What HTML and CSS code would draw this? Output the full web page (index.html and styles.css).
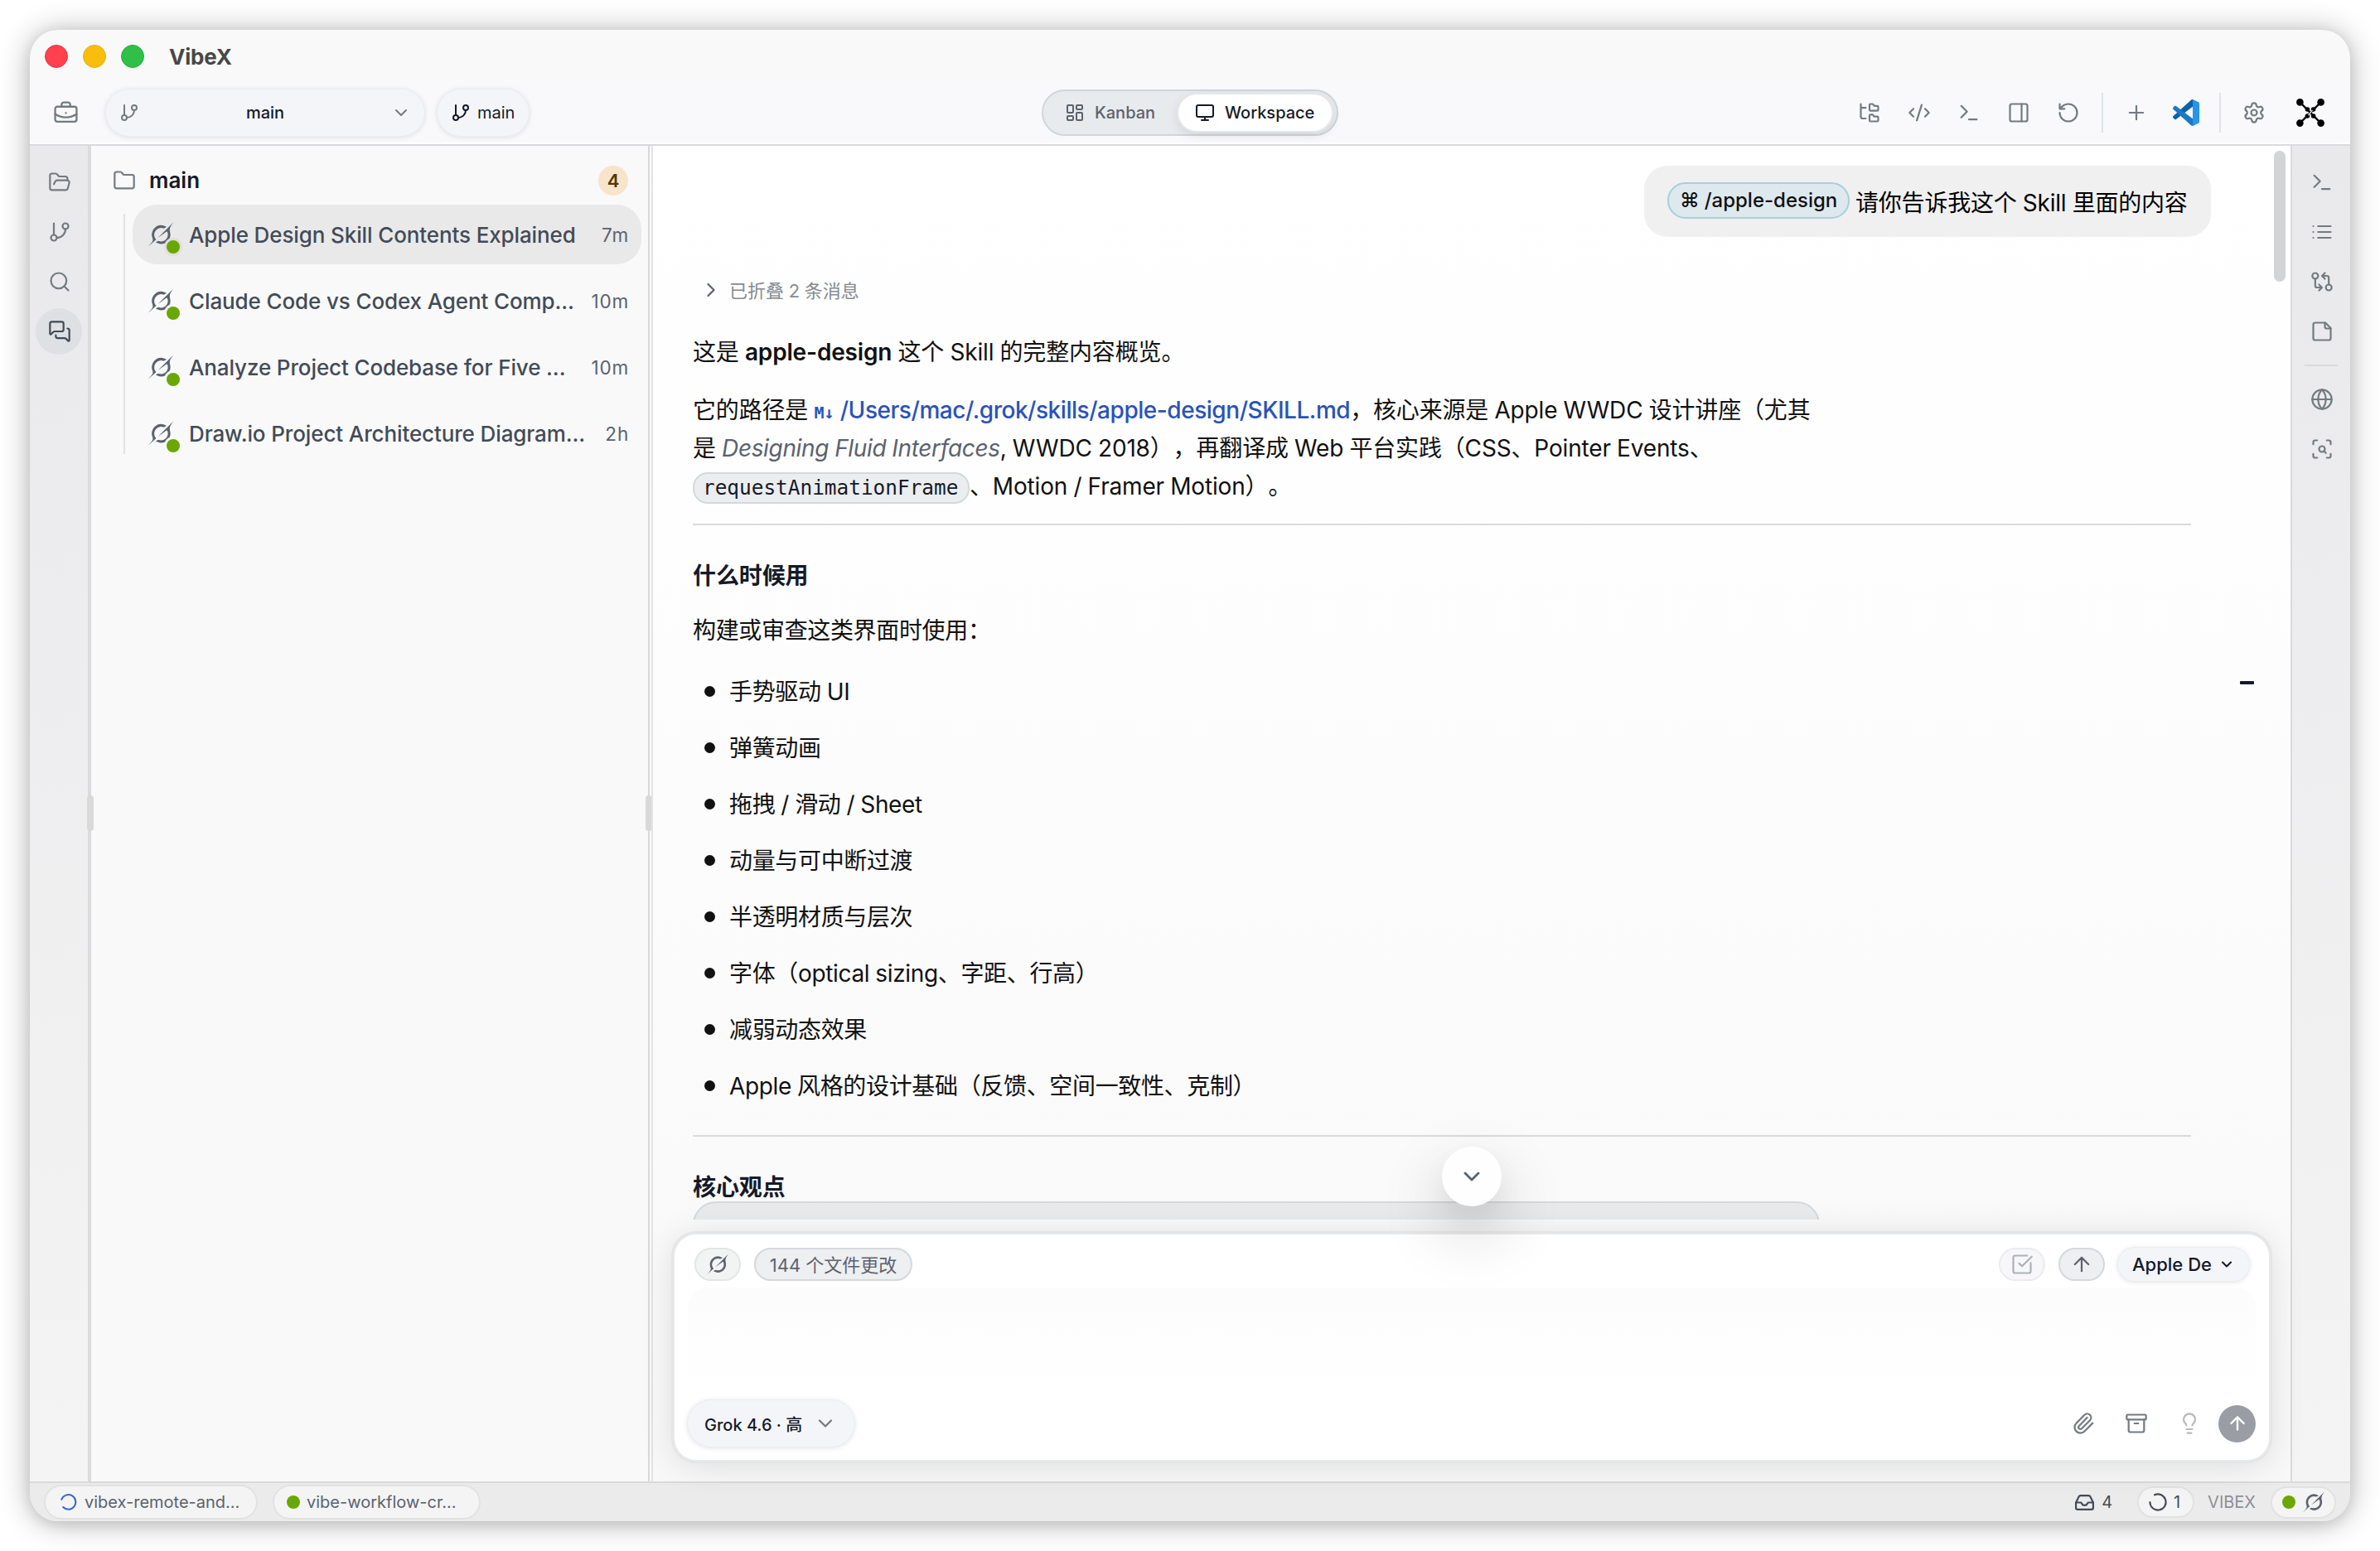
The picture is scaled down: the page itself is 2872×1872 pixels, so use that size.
FILE: index.html
```html
<!DOCTYPE html>
<html lang="zh-CN">
<head>
    <meta charset="UTF-8">
    <title>VibeX</title>
    <link rel="stylesheet" href="styles.css">
</head>
<body>
    <svg class="sprite" xmlns="http://www.w3.org/2000/svg">
        <symbol id="briefcase" viewBox="0 0 24 24"><path d="M12 12h.01M16 6V4a2 2 0 0 0-2-2h-4a2 2 0 0 0-2 2v2M22 13a18.15 18.15 0 0 1-20 0"/><rect width="20" height="14" x="2" y="6" rx="2"/></symbol>
        <symbol id="branch" viewBox="0 0 24 24"><path d="M6 3v12M18 9a9 9 0 0 1-9 9"/><circle cx="18" cy="6" r="3"/><circle cx="6" cy="18" r="3"/></symbol>
        <symbol id="chevron-down" viewBox="0 0 24 24"><path d="m6 9 6 6 6-6"/></symbol>
        <symbol id="chevron-right" viewBox="0 0 24 24"><path d="m9 18 6-6-6-6"/></symbol>
        <symbol id="kanban" viewBox="0 0 24 24"><rect width="7" height="9" x="3" y="3" rx="1"/><rect width="7" height="5" x="14" y="3" rx="1"/><rect width="7" height="9" x="14" y="12" rx="1"/><rect width="7" height="5" x="3" y="16" rx="1"/></symbol>
        <symbol id="monitor" viewBox="0 0 24 24"><rect width="20" height="14" x="2" y="3" rx="2"/><path d="M8 21h8M12 17v4"/></symbol>
        <symbol id="folder-tree" viewBox="0 0 24 24"><path d="M20 10a1 1 0 0 0 1-1V6a1 1 0 0 0-1-1h-2.5a1 1 0 0 1-.8-.4l-.9-1.2A1 1 0 0 0 15 3h-2a1 1 0 0 0-1 1v5a1 1 0 0 0 1 1ZM20 21a1 1 0 0 0 1-1v-3a1 1 0 0 0-1-1h-2.9a1 1 0 0 1-.88-.55l-.42-.85a1 1 0 0 0-.92-.6H13a1 1 0 0 0-1 1v5a1 1 0 0 0 1 1ZM3 5a2 2 0 0 0 2 2h3M3 3v13a2 2 0 0 0 2 2h3"/></symbol>
        <symbol id="code" viewBox="0 0 24 24"><path d="m18 16 4-4-4-4M6 8l-4 4 4 4M14.5 4l-5 16"/></symbol>
        <symbol id="terminal" viewBox="0 0 24 24"><path d="m4 17 6-6-6-6M12 19h8"/></symbol>
        <symbol id="panel" viewBox="0 0 24 24"><rect width="18" height="18" x="3" y="3" rx="2"/><path d="M15 3v18"/></symbol>
        <symbol id="rotate" viewBox="0 0 24 24"><path d="M3 12a9 9 0 1 0 9-9 9.75 9.75 0 0 0-6.74 2.74L3 8M3 3v5h5"/></symbol>
        <symbol id="plus" viewBox="0 0 24 24"><path d="M5 12h14M12 5v14"/></symbol>
        <symbol id="gear" viewBox="0 0 24 24"><path d="M9.671 4.136a2.34 2.34 0 0 1 4.659 0 2.34 2.34 0 0 0 3.319 1.915 2.34 2.34 0 0 1 2.33 4.033 2.34 2.34 0 0 0 0 3.831 2.34 2.34 0 0 1-2.33 4.033 2.34 2.34 0 0 0-3.319 1.915 2.34 2.34 0 0 1-4.659 0 2.34 2.34 0 0 0-3.32-1.915 2.34 2.34 0 0 1-2.33-4.033 2.34 2.34 0 0 0 0-3.831A2.34 2.34 0 0 1 6.35 6.051a2.34 2.34 0 0 0 3.319-1.915"/><circle cx="12" cy="12" r="3"/></symbol>
        <symbol id="folder-open" viewBox="0 0 24 24"><path d="m6 14 1.5-2.9A2 2 0 0 1 9.24 10H20a2 2 0 0 1 1.94 2.5l-1.54 6a2 2 0 0 1-1.95 1.5H4a2 2 0 0 1-2-2V5a2 2 0 0 1 2-2h3.9a2 2 0 0 1 1.69.9l.81 1.2a2 2 0 0 0 1.67.9H18a2 2 0 0 1 2 2v2"/></symbol>
        <symbol id="folder" viewBox="0 0 24 24"><path d="M20 20a2 2 0 0 0 2-2V8a2 2 0 0 0-2-2h-7.9a2 2 0 0 1-1.69-.9L9.6 3.9A2 2 0 0 0 7.93 3H4a2 2 0 0 0-2 2v13a2 2 0 0 0 2 2Z"/></symbol>
        <symbol id="search" viewBox="0 0 24 24"><circle cx="11" cy="11" r="8"/><path d="m21 21-4.34-4.34"/></symbol>
        <symbol id="messages" viewBox="0 0 24 24"><path d="M16 10a2 2 0 0 1-2 2H6.828a2 2 0 0 0-1.414.586l-2.202 2.202A.71.71 0 0 1 2 14.286V4a2 2 0 0 1 2-2h10a2 2 0 0 1 2 2zM20 9a2 2 0 0 1 2 2v10.286a.71.71 0 0 1-1.212.502l-2.202-2.202A2 2 0 0 0 17.172 19H10a2 2 0 0 1-2-2v-1"/></symbol>
        <symbol id="list" viewBox="0 0 24 24"><path d="M3 6h.01M3 12h.01M3 18h.01M8 6h13M8 12h13M8 18h13"/></symbol>
        <symbol id="compare" viewBox="0 0 24 24"><circle cx="5" cy="6" r="3"/><path d="M12 6h5a2 2 0 0 1 2 2v7M15 9l-3-3 3-3M12 18H7a2 2 0 0 1-2-2V9M9 15l3 3-3 3"/><circle cx="19" cy="18" r="3"/></symbol>
        <symbol id="note" viewBox="0 0 24 24"><path d="M15.5 3H5a2 2 0 0 0-2 2v14a2 2 0 0 0 2 2h14a2 2 0 0 0 2-2V8.5L15.5 3Z"/><path d="M15 3v4a2 2 0 0 0 2 2h4"/></symbol>
        <symbol id="globe" viewBox="0 0 24 24"><circle cx="12" cy="12" r="10"/><path d="M12 2a14.5 14.5 0 0 0 0 20 14.5 14.5 0 0 0 0-20M2 12h20"/></symbol>
        <symbol id="scan" viewBox="0 0 24 24"><path d="M3 7V5a2 2 0 0 1 2-2h2M17 3h2a2 2 0 0 1 2 2v2M21 17v2a2 2 0 0 1-2 2h-2M7 21H5a2 2 0 0 1-2-2v-2M16 16l-1.9-1.9"/><circle cx="12" cy="12" r="3"/></symbol>
        <symbol id="check-square" viewBox="0 0 24 24"><path d="M21 10.656V19a2 2 0 0 1-2 2H5a2 2 0 0 1-2-2V5a2 2 0 0 1 2-2h12.344M9 11l3 3L22 4"/></symbol>
        <symbol id="arrow-up" viewBox="0 0 24 24"><path d="m5 12 7-7 7 7M12 19V5"/></symbol>
        <symbol id="clip" viewBox="0 0 24 24"><path d="m16 6-8.414 8.586a2 2 0 0 0 2.829 2.829l8.414-8.586a4 4 0 1 0-5.657-5.657l-8.379 8.551a6 6 0 1 0 8.485 8.485l8.379-8.551"/></symbol>
        <symbol id="archive" viewBox="0 0 24 24"><rect width="20" height="5" x="2" y="3" rx="1"/><path d="M4 8v11a2 2 0 0 0 2 2h12a2 2 0 0 0 2-2V8M10 12h4"/></symbol>
        <symbol id="bulb" viewBox="0 0 24 24"><path d="M15 14c.2-1 .7-1.7 1.5-2.5 1-.9 1.5-2.2 1.5-3.5A6 6 0 0 0 6 8c0 1 .2 2.2 1.5 3.5.7.7 1.3 1.5 1.5 2.5M9 18h6M10 22h4"/></symbol>
        <symbol id="inbox" viewBox="0 0 24 24"><path d="M22 12h-6l-2 3h-4l-2-3H2M5.45 5.11 2 12v6a2 2 0 0 0 2 2h16a2 2 0 0 0 2-2v-6l-3.45-6.89A2 2 0 0 0 16.76 4H7.24a2 2 0 0 0-1.79 1.11z"/></symbol>
        <symbol id="spinner" viewBox="0 0 24 24"><path d="M2.5 8.5A9.6 9.6 0 1 1 4.5 18.5"/></symbol>
        <symbol id="spinner-left" viewBox="0 0 24 24"><path d="M8 3.3A9.6 9.6 0 1 1 2.4 12"/></symbol>
        <symbol id="grok" viewBox="0 0 24 24"><path d="M9.27 15.29l7.978-5.897c.391-.29.95-.177 1.137.272.98 2.369.542 5.215-1.41 7.169-1.951 1.954-4.667 2.382-7.149 1.406l-2.711 1.257c3.889 2.661 8.611 2.003 11.562-.953 2.341-2.344 3.066-5.539 2.388-8.42l.006.007c-.983-4.232.242-5.924 2.75-9.383.06-.082.12-.164.179-.248l-3.301 3.305v-.01L9.267 15.292M7.623 16.723c-2.792-2.67-2.31-6.801.071-9.184 1.761-1.763 4.647-2.483 7.166-1.425l2.705-1.25a7.808 7.808 0 0 0-1.829-1A8.975 8.975 0 0 0 5.984 5.83c-2.533 2.536-3.33 6.436-1.962 9.764 1.022 2.487-.653 4.246-2.34 6.022-.599.63-1.199 1.259-1.682 1.925l7.62-6.815"/></symbol>
    </svg>

    <div class="window">
        <div class="titlebar">
            <span class="light red"></span>
            <span class="light yellow"></span>
            <span class="light green"></span>
            <span class="app-name">VibeX</span>
        </div>

        <header class="toolbar">
            <div class="toolbar-left">
                <svg class="icon briefcase"><use href="#briefcase"/></svg>
                <div class="pill branch-select">
                    <svg class="icon small"><use href="#branch"/></svg>
                    <span>main</span>
                    <svg class="icon small"><use href="#chevron-down"/></svg>
                </div>
                <div class="pill branch-button">
                    <svg class="icon small"><use href="#branch"/></svg>
                    <span>main</span>
                </div>
            </div>
            <div class="switch">
                <div class="switch-item"><svg class="icon small"><use href="#kanban"/></svg>Kanban</div>
                <div class="switch-item active"><svg class="icon small"><use href="#monitor"/></svg>Workspace</div>
            </div>
            <div class="toolbar-right">
                <span class="tool"><svg class="icon"><use href="#folder-tree"/></svg></span>
                <span class="tool"><svg class="icon"><use href="#code"/></svg></span>
                <span class="tool"><svg class="icon"><use href="#terminal"/></svg></span>
                <span class="tool"><svg class="icon"><use href="#panel"/></svg></span>
                <span class="tool"><svg class="icon"><use href="#rotate"/></svg></span>
                <span class="divider"></span>
                <span class="tool"><svg class="icon"><use href="#plus"/></svg></span>
                <span class="tool">
                    <svg class="vscode" viewBox="0 0 100 100">
                        <path fill="#0b62a8" d="M96.46 10.8 75.86.88C73.47-.27 70.62.21 68.75 2.08L1.3 63.58c-1.81 1.65-1.81 4.51 0 6.16l5.51 5.01c1.48 1.35 3.72 1.45 5.32.24L93.36 13.36C96.08 11.3 100 13.24 100 16.66v-.24c0-2.4-1.38-4.58-3.54-5.62z"/>
                        <path fill="#1a78c4" d="M96.46 89.2l-20.6 9.92c-2.39 1.15-5.24.67-7.11-1.2L1.3 36.42c-1.81-1.65-1.81-4.51 0-6.16l5.51-5.01c1.48-1.35 3.72-1.45 5.32-.24l81.23 61.63c2.72 2.06 6.64.12 6.64-3.3v.24c0 2.4-1.38 4.58-3.54 5.62z"/>
                        <path fill="#2596ea" d="M75.86 99.13c-2.39 1.15-5.24.66-7.11-1.21C71.06 100.22 75 98.59 75 95.33V4.67c0-3.26-3.94-4.89-6.25-2.58 1.87-1.87 4.72-2.36 7.11-1.21l20.6 9.91C98.62 11.83 100 14.02 100 16.41v67.17c0 2.4-1.38 4.58-3.54 5.62l-20.6 9.92z"/>
                    </svg>
                </span>
                <span class="divider"></span>
                <span class="tool"><svg class="icon"><use href="#gear"/></svg></span>
                <svg class="brand" viewBox="0 0 34 34">
                    <path d="M5 5l24 24M29 5 5 29" stroke="#000" stroke-width="2.4"/>
                    <circle cx="4.4" cy="4.4" r="4.3"/><circle cx="29.6" cy="4.4" r="4.3"/><circle cx="4.4" cy="29.6" r="4.3"/><circle cx="29.6" cy="29.6" r="4.3"/>
                    <circle cx="13.4" cy="13" r="2.8"/><circle cx="20.6" cy="13" r="2.8"/><circle cx="13.4" cy="21" r="2.8"/><circle cx="20.6" cy="21" r="2.8"/>
                    <path d="M19.5 13.8 14.5 20.2" stroke="#fff" stroke-width="1.2"/>
                </svg>
            </div>
        </header>

        <div class="body">
            <nav class="rail left">
                <span class="rail-item"><svg class="icon"><use href="#folder-open"/></svg></span>
                <span class="rail-item"><svg class="icon"><use href="#branch"/></svg></span>
                <span class="rail-item"><svg class="icon"><use href="#search"/></svg></span>
                <span class="rail-item active"><svg class="icon"><use href="#messages"/></svg></span>
                <span class="grip"></span>
            </nav>

            <aside class="sidebar">
                <div class="group-head">
                    <svg class="icon"><use href="#folder"/></svg>
                    <span class="group-name">main</span>
                    <span class="count">4</span>
                </div>
                <div class="sessions">
                    <div class="session active">
                        <span class="avatar"><svg class="grok"><use href="#grok"/></svg><i class="dot"></i></span>
                        <span class="session-title">Apple Design Skill Contents Explained</span>
                        <span class="time">7m</span>
                    </div>
                    <div class="session">
                        <span class="avatar"><svg class="grok"><use href="#grok"/></svg><i class="dot"></i></span>
                        <span class="session-title">Claude Code vs Codex Agent Comp...</span>
                        <span class="time">10m</span>
                    </div>
                    <div class="session">
                        <span class="avatar"><svg class="grok"><use href="#grok"/></svg><i class="dot"></i></span>
                        <span class="session-title">Analyze Project Codebase for Five ...</span>
                        <span class="time">10m</span>
                    </div>
                    <div class="session">
                        <span class="avatar"><svg class="grok"><use href="#grok"/></svg><i class="dot"></i></span>
                        <span class="session-title">Draw.io Project Architecture Diagram...</span>
                        <span class="time">2h</span>
                    </div>
                </div>
                <span class="grip"></span>
            </aside>

            <main class="chat">
                <div class="messages">
                    <div class="bubble">
                        <span class="skill-tag"><span class="cmd">⌘</span> /apple-design</span>
                        <span class="bubble-text">请你告诉我这个 Skill 里面的内容</span>
                    </div>
                    <div class="folded"><svg class="icon"><use href="#chevron-right"/></svg><span>已折叠 2 条消息</span></div>
                    <article class="reply">
                        <p>这是 <strong>apple-design</strong> 这个 Skill 的完整内容概览。</p>
                        <p>它的路径是 <span class="md">M↓</span> <a>/Users/mac/.grok/skills/apple-design/SKILL.md</a>，核心来源是 Apple WWDC 设计讲座（尤其<br>是 <em>Designing Fluid Interfaces</em>, WWDC 2018），再翻译成 Web 平台实践（CSS、Pointer Events、<br><code>requestAnimationFrame</code>、Motion / Framer Motion）。</p>
                        <hr>
                        <h3>什么时候用</h3>
                        <p class="lead">构建或审查这类界面时使用：</p>
                        <ul>
                            <li>手势驱动 UI</li>
                            <li>弹簧动画</li>
                            <li>拖拽 / 滑动 / Sheet</li>
                            <li>动量与可中断过渡</li>
                            <li>半透明材质与层次</li>
                            <li>字体（optical sizing、字距、行高）</li>
                            <li>减弱动态效果</li>
                            <li>Apple 风格的设计基础（反馈、空间一致性、克制）</li>
                        </ul>
                        <hr class="second">
                        <h3>核心观点</h3>
                        <div class="code-block"></div>
                    </article>
                </div>
                <span class="scrollbar"></span>
                <span class="minimap-mark"></span>

                <section class="composer">
                    <div class="composer-row">
                        <span class="chip agent"><svg class="grok"><use href="#grok"/></svg></span>
                        <span class="chip files">144 个文件更改</span>
                        <span class="spacer"></span>
                        <span class="chip faded"><svg class="icon"><use href="#check-square"/></svg></span>
                        <span class="chip"><svg class="icon"><use href="#arrow-up"/></svg></span>
                        <span class="pill thread">Apple De<svg class="icon"><use href="#chevron-down"/></svg></span>
                    </div>
                    <div class="input-area"></div>
                    <div class="composer-row bottom">
                        <span class="pill model">Grok 4.6 · 高<svg class="icon"><use href="#chevron-down"/></svg></span>
                        <span class="spacer"></span>
                        <span class="action"><svg class="icon"><use href="#clip"/></svg></span>
                        <span class="action"><svg class="icon"><use href="#archive"/></svg></span>
                        <span class="action dim"><svg class="icon"><use href="#bulb"/></svg></span>
                        <span class="send"><svg class="icon"><use href="#arrow-up"/></svg></span>
                    </div>
                </section>
                <span class="scroll-down"><svg class="icon"><use href="#chevron-down"/></svg></span>
            </main>

            <nav class="rail right">
                <span class="rail-item"><svg class="icon"><use href="#terminal"/></svg></span>
                <span class="rail-item"><svg class="icon"><use href="#list"/></svg></span>
                <span class="rail-item"><svg class="icon"><use href="#compare"/></svg></span>
                <span class="rail-item"><svg class="icon"><use href="#note"/></svg></span>
                <span class="rail-divider"></span>
                <span class="rail-item"><svg class="icon"><use href="#globe"/></svg></span>
                <span class="rail-item"><svg class="icon"><use href="#scan"/></svg></span>
            </nav>
        </div>

        <footer class="statusbar">
            <span class="status-pill remote"><svg class="icon"><use href="#spinner"/></svg>vibex-remote-and...</span>
            <span class="status-pill workflow"><i class="dot"></i>vibe-workflow-cr...</span>
            <span class="spacer"></span>
            <span class="inbox"><svg class="icon"><use href="#inbox"/></svg>4</span>
            <span class="status-pill running"><svg class="icon"><use href="#spinner-left"/></svg>1</span>
            <span class="project">VIBEX</span>
            <span class="status-pill agent-state"><i class="dot"></i><svg class="grok"><use href="#grok"/></svg></span>
        </footer>
    </div>
</body>
</html>
```
FILE: styles.css
```css
* {
    box-sizing: border-box;
}
body {
    margin: 0;
    padding: 36px;
    width: 2872px;
    height: 1872px;
    overflow: hidden;
    background-color: #fff;
    color: #151a28;
    font-family: Inter, "Noto Sans CJK SC", sans-serif;
    font-size: 20px;
    text-spacing-trim: space-all;
}
.sprite {
    display: none;
}
.icon {
    width: 28px;
    height: 28px;
    flex: none;
    fill: none;
    stroke: currentColor;
    stroke-width: 1.9;
    stroke-linecap: round;
    stroke-linejoin: round;
}
.icon.small {
    width: 24px;
    height: 24px;
    stroke-width: 2;
}
.grok {
    fill: #5b626e;
    flex: none;
}
.dot {
    width: 16px;
    height: 16px;
    border-radius: 50%;
    background-color: #6ba702;
    flex: none;
}
.spacer {
    flex: 1;
}

.window {
    width: 2800px;
    height: 1800px;
    border-radius: 34px;
    background-color: #f9f9f9;
    box-shadow: 0 2px 36px rgba(0, 0, 0, 0.3), 0 4px 16px rgba(0, 0, 0, 0.08);
    overflow: hidden;
    display: flex;
    flex-direction: column;
}

/* title bar */
.titlebar {
    height: 64px;
    padding-left: 18px;
    display: flex;
    align-items: center;
    flex: none;
}
.light {
    width: 28px;
    height: 28px;
    border-radius: 50%;
    margin-right: 18px;
}
.red {
    background-color: #ff414f;
    border: 1px solid #ec3040;
}
.yellow {
    background-color: #f8be0b;
    border: 1px solid #e9ae08;
}
.green {
    background-color: #30c048;
    border: 1px solid #1fae38;
}
.app-name {
    margin-left: 12px;
    padding-top: 1px;
    font-size: 26px;
    font-weight: 700;
    letter-spacing: -0.2px;
    color: #474747;
}

/* toolbar */
.toolbar {
    height: 76px;
    flex: none;
    padding-bottom: 2px;
    background-color: #f9f9fc;
    border-bottom: 2px solid #d9dadd;
    box-shadow: inset 0 -2px 0 #fff;
    display: grid;
    grid-template-columns: 1fr auto 1fr;
    align-items: center;
}
.toolbar-left, .toolbar-right {
    display: flex;
    align-items: center;
}
.toolbar-left {
    padding-left: 28px;
}
.toolbar .briefcase {
    width: 31px;
    height: 31px;
    color: #737b80;
    stroke-width: 1.8;
}
.pill {
    display: flex;
    align-items: center;
    background-color: #f4f5f8;
    border-radius: 28px;
    box-shadow: 0 0 0 1px #ededf0, 0 1px 7px rgba(0, 0, 0, 0.14);
    font-weight: 500;
}
.branch-select {
    width: 384px;
    height: 56px;
    margin-left: 33px;
    padding: 0 16px;
    justify-content: space-between;
}
.branch-select .icon {
    color: #737b80;
}
.branch-button {
    width: 110px;
    height: 56px;
    margin-left: 16px;
    padding-left: 16px;
    gap: 8px;
    font-weight: 400;
}
.switch {
    display: flex;
    width: 358px;
    height: 56px;
    padding: 4px 6px 4px 26px;
    border: 2px solid #d1d5d9;
    border-radius: 28px;
    background-color: #e7ebee;
    justify-content: space-between;
    align-items: center;
}
.switch-item {
    display: flex;
    align-items: center;
    gap: 12px;
    font-weight: 500;
    color: #5b626e;
}
.switch-item.active {
    width: 185px;
    height: 44px;
    padding-left: 20px;
    border-radius: 22px;
    background-color: #fff;
    color: #151a28;
    box-shadow: 0 0 0 2px #e5e6ea, 0 4px 14px rgba(0, 0, 0, 0.12);
}
.toolbar-right {
    justify-content: flex-end;
    padding-right: 31px;
    color: #737b80;
}
.tool {
    width: 60px;
    display: flex;
    justify-content: center;
}
.divider {
    width: 2px;
    height: 48px;
    margin: 0 10px;
    background-color: #dfe3e6;
}
.vscode {
    width: 32px;
    height: 32px;
}
.brand {
    width: 34px;
    height: 34px;
    margin-left: 21px;
}

/* body */
.body {
    flex: 1;
    min-height: 0;
    display: flex;
}
.rail {
    flex: none;
    display: flex;
    flex-direction: column;
    align-items: center;
    gap: 4px;
    padding-top: 16px;
    color: #737b80;
    background: linear-gradient(#e9e9ec, #f4f4f4);
}
.rail.left {
    position: relative;
    z-index: 1;
    width: 74px;
    border-right: 4px solid #dbdbdd;
}
.rail.right {
    width: 72px;
    border-left: 2px solid #d9dadc;
}
.rail-item {
    width: 56px;
    height: 56px;
    padding-left: 2px;
    border-radius: 50%;
    display: flex;
    align-items: center;
    justify-content: center;
}
.rail-item.active {
    background-color: #dee0e3;
    color: #434b57;
}
.rail-divider {
    width: 40px;
    height: 2px;
    margin: 8px 0;
    background-color: #d9dadc;
}
.grip {
    position: absolute;
    right: -7px;
    top: 784px;
    width: 8px;
    height: 43px;
    border-radius: 4px;
    background-color: #d9d9da;
}

.sidebar {
    position: relative;
    flex: none;
    width: 674px;
    padding: 20px 8px 0 26px;
    background-color: #f9f9f9;
    border-right: 2px solid #d9d9da;
}
.sidebar .grip {
    right: -5px;
}
.group-head {
    height: 44px;
    display: flex;
    align-items: center;
    padding-right: 16px;
    padding-bottom: 1px;
    color: #737b80;
}
.group-name {
    flex: 1;
    margin-left: 16px;
    font-size: 26px;
    font-weight: 600;
    color: #151a28;
}
.count {
    width: 36px;
    height: 36px;
    border-radius: 50%;
    background-color: #f8e4ca;
    color: #53340c;
    font-size: 22px;
    font-weight: 600;
    line-height: 36px;
    text-align: center;
}
.sessions {
    position: relative;
    margin-left: 24px;
    margin-top: 7px;
    display: flex;
    flex-direction: column;
    gap: 8px;
}
.sessions::before {
    content: "";
    position: absolute;
    left: -11px;
    top: 11px;
    width: 2px;
    height: 290px;
    background-color: #e2e2e4;
}
.session {
    height: 72px;
    border-radius: 30px;
    display: flex;
    align-items: center;
    padding: 0 15px 0 19px;
}
.session.active {
    background-color: #e9e9e9;
}
.avatar {
    position: relative;
    width: 30px;
    height: 30px;
}
.avatar .grok {
    width: 30px;
    height: 30px;
}
.avatar .dot {
    position: absolute;
    left: 22px;
    top: 22px;
    box-shadow: 0 0 0 3px #f9f9f9;
}
.active .avatar .dot {
    box-shadow: 0 0 0 3px #dfdfdf;
}
.session-title {
    flex: 1;
    margin-left: 19px;
    font-size: 26px;
    color: #434b57;
    font-weight: 450;
    letter-spacing: -0.12px;
    white-space: nowrap;
}
.time {
    font-size: 22.5px;
    letter-spacing: 0.8px;
    color: #5b626e;
}

/* chat */
.chat {
    position: relative;
    flex: 1;
    min-width: 0;
    display: flex;
    flex-direction: column;
    margin-left: 2px;
    border-left: 2px solid #e4e4e5;
    background: linear-gradient(#fff, #fdfdfd 40%, #f8f8f8);
}
.messages {
    flex: none;
    height: 1296px;
    padding: 24px 96px 0 48px;
    overflow: hidden;
    display: flex;
    flex-direction: column;
    font-size: 28px;
    letter-spacing: -0.34px;
    word-spacing: -0.5px;
    color: #111;
}
.bubble {
    align-self: flex-end;
    height: 86px;
    width: 684px;
    flex: none;
    border-radius: 28px;
    background-color: #f0f0f0;
    padding: 0 28px;
    display: flex;
    align-items: center;
    gap: 7px;
    white-space: nowrap;
    letter-spacing: -0.2px;
    color: #000;
}
.skill-tag {
    width: 220px;
    height: 44px;
    flex: none;
    margin-bottom: 2px;
    border: 2px solid #a5d0da;
    border-radius: 22px;
    background-color: #dde9ed;
    font-size: 24px;
    font-weight: 500;
    line-height: 39px;
    letter-spacing: 0;
    padding-left: 13px;
    color: #111;
}
.cmd {
    font-family: Inter, "DejaVu Sans", sans-serif;
}
.folded {
    margin-top: 50px;
    padding-left: 8px;
    height: 28px;
    flex: none;
    display: flex;
    align-items: center;
    gap: 8px;
    font-size: 22px;
    letter-spacing: 0;
    color: #858b90;
}
.folded span {
    padding-bottom: 2px;
}
.folded .icon {
    color: #5b626e;
}
.reply {
    margin-right: 24px;
    line-height: 46px;
}
.reply p {
    margin: 24px 0 0;
    white-space: nowrap;
    letter-spacing: -0.16px;
}
.reply p:first-child {
    margin-top: 38px;
}
.reply strong {
    font-weight: 600;
}
.reply a {
    color: #2a52b8;
    font-weight: 500;
    letter-spacing: -0.46px;
}
.md {
    font-family: "DejaVu Sans Mono", monospace;
    font-size: 20px;
    line-height: 1;
    font-weight: 700;
    letter-spacing: 0;
    color: #2a52b8;
}
.reply em {
    color: #5b626e;
    letter-spacing: -0.34px;
}
.reply code {
    display: inline-block;
    height: 38px;
    width: 334px;
    line-height: 34px;
    border: 2px solid #d5d9dc;
    border-radius: 18px;
    background-color: #ecedef;
    padding-left: 10px;
    font-family: "DejaVu Sans Mono", monospace;
    font-size: 24.4px;
    letter-spacing: 0;
    color: #151a28;
    vertical-align: middle;
}
.reply hr {
    margin: 22px 0 0;
    border: 0;
    height: 2px;
    background-color: #d9dadb;
}
.reply h3 {
    margin: 44px 0 0;
    font-size: 28px;
    line-height: 34px;
    font-weight: 600;
    letter-spacing: -0.1px;
    color: #151a28;
}
.reply .lead {
    margin-top: 26px;
    letter-spacing: -0.34px;
}
.reply ul {
    list-style: none;
    margin: 28px 0 0;
    padding: 0;
    display: flex;
    flex-direction: column;
    gap: 22px;
}
.reply li {
    display: flex;
    align-items: center;
    white-space: pre;
}
.reply li::before {
    content: "";
    width: 13px;
    height: 13px;
    border-radius: 50%;
    background-color: #111;
    margin: 0 17px 2px 14px;
}
.reply hr.second {
    margin-top: 36px;
}
.code-block {
    width: 1360px;
    height: 80px;
    border: 2px solid #d5d8db;
    border-radius: 28px;
    background-color: #e8eaec;
}
.scrollbar {
    position: absolute;
    right: 6px;
    top: 6px;
    width: 14px;
    height: 158px;
    border-radius: 7px;
    background-color: #d2d4d6;
}
.minimap-mark {
    position: absolute;
    right: 44px;
    top: 646px;
    width: 17px;
    height: 4px;
    border-radius: 1px;
    background-color: #151a28;
}
.scroll-down {
    position: absolute;
    left: 952px;
    top: 1208px;
    width: 72px;
    height: 72px;
    border-radius: 50%;
    background-color: #fefefe;
    color: #5b626e;
    display: flex;
    align-items: center;
    justify-content: center;
    box-shadow: 0 32px 80px rgba(0, 0, 0, 0.2), 0 16px 32px rgba(0, 0, 0, 0.05);
}
.scroll-down .icon {
    width: 32px;
    height: 32px;
    stroke-width: 2.1;
}

/* composer */
.composer {
    margin: 18px 26px 0 26px;
    height: 272px;
    border-radius: 26px;
    background-color: #fff;
    box-shadow: 0 0 0 2px #e8e9eb, 0 0 0 4px #e3e5e6, 0 4px 44px rgba(0, 0, 0, 0.13);
    display: flex;
    flex-direction: column;
}
.composer-row {
    display: flex;
    align-items: center;
    gap: 16px;
    padding: 16px 24px 0;
}
.chip {
    height: 40px;
    min-width: 56px;
    border: 2px solid #d5d8dc;
    border-radius: 20px;
    background-color: #eeeff1;
    display: flex;
    align-items: center;
    justify-content: center;
    color: #5b626e;
}
.chip.agent {
    background-color: #f2f4f4;
    border-color: #e3e6e6;
}
.chip .grok {
    width: 26px;
    height: 26px;
}
.chip.files {
    width: 191px;
    padding-bottom: 2px;
    font-size: 22px;
    white-space: nowrap;
}
.chip.faded {
    background-color: #f7f7f9;
    border-color: #ebecee;
    color: #adb1b7;
}
.thread {
    width: 158px;
    height: 40px;
    padding-left: 17px;
    gap: 8px;
    font-size: 22px;
    white-space: nowrap;
}
.thread .icon {
    width: 20px;
    height: 20px;
    stroke-width: 2.5;
}
.input-area {
    height: 120px;
    margin: 8px 16px 0;
    border-radius: 24px;
    background: linear-gradient(#fcfcfc, #fff);
}
.composer-row.bottom {
    padding: 16px 16px 0;
    gap: 0;
}
.model {
    width: 201px;
    height: 56px;
    padding-left: 20px;
    gap: 14px;
    white-space: nowrap;
}
.model .icon {
    color: #737b80;
}
.action {
    width: 64px;
    display: flex;
    justify-content: center;
    color: #737b80;
}
.action.dim {
    color: #b7babd;
}
.send {
    width: 45px;
    height: 45px;
    margin-left: 3px;
    border-radius: 50%;
    background-color: #999da4;
    color: #fff;
    display: flex;
    align-items: center;
    justify-content: center;
}
.send .icon {
    width: 26px;
    height: 26px;
    stroke-width: 2.2;
}

/* status bar */
.statusbar {
    height: 48px;
    flex: none;
    border-top: 2px solid #d9dadb;
    background-color: #ebebeb;
    display: flex;
    align-items: center;
    padding: 0 17px;
    color: #5b626e;
    white-space: nowrap;
}
.status-pill {
    height: 42px;
    display: flex;
    align-items: center;
    border: 2px solid #e2e2e2;
    border-radius: 21px;
    background-color: #f4f4f4;
}
.remote {
    width: 258px;
    padding-left: 17px;
    gap: 8px;
}
.remote .icon {
    width: 22px;
    height: 22px;
    color: #3b66cc;
    stroke-width: 2.2;
}
.workflow {
    width: 251px;
    margin-left: 18px;
    padding-left: 15px;
    gap: 8px;
}
.inbox {
    display: flex;
    align-items: center;
    gap: 8px;
    color: #434b57;
}
.inbox .icon {
    width: 25px;
    height: 25px;
    stroke-width: 2.1;
}
.running {
    width: 69px;
    height: 38px;
    margin-left: 30px;
    padding-left: 11px;
    gap: 7px;
    color: #434b57;
}
.running .icon {
    width: 24px;
    height: 24px;
    stroke-width: 2.1;
}
.project {
    margin: 0 18px 0 16px;
    color: #8b9098;
}
.agent-state {
    width: 79px;
    height: 39px;
    padding-left: 12px;
    gap: 9px;
}
.agent-state .grok {
    width: 26px;
    height: 26px;
}
```
